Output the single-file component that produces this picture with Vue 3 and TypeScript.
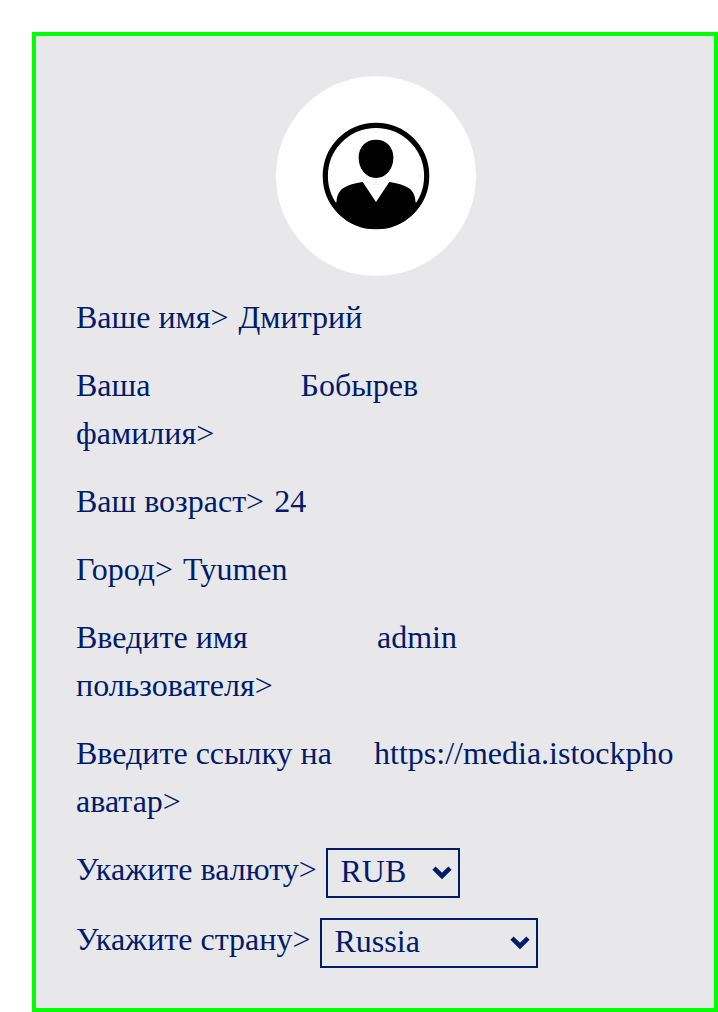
<script setup lang="ts">
import { ref } from 'vue'

interface Field {
  label: string
  value: string
  labelWidth?: number
}

const fields = ref<Field[]>([
  { label: 'Ваше имя>', value: 'Дмитрий' },
  { label: 'Ваша фамилия>', value: 'Бобырев', labelWidth: 214.6 },
  { label: 'Ваш возраст>', value: '24' },
  { label: 'Город>', value: 'Tyumen' },
  { label: 'Введите имя пользователя>', value: 'admin', labelWidth: 291 },
  { label: 'Введите ссылку на аватар>', value: 'https://media.istockpho', labelWidth: 288 },
])

const selects = ref([
  { label: 'Укажите валюту>', value: 'RUB', labelWidth: 240, width: 134 },
  { label: 'Укажите страну>', value: 'Russia', labelWidth: 234, width: 218 },
])
</script>

<template>
  <main class="page">
    <section class="card">
      <div class="avatar">
        <svg width="108" height="108" viewBox="0 0 108 108">
          <defs>
            <clipPath id="disc"><circle cx="54" cy="54" r="53" /></clipPath>
          </defs>
          <circle cx="54" cy="54" r="50.7" fill="none" stroke="#000" stroke-width="5.2" />
          <path
            d="M54 17.700C64.500 17.700 71.400 25.200 71.400 35.500C71.400 47 64 56 54 56C44 56 36.600 47 36.600 35.500C36.600 25.200 43.500 17.700 54 17.700Z"
          />
          <path
            clip-path="url(#disc)"
            d="M0 81H13.600L14.500 80C14.700 74 17 69 21 66.300C26 63 33 61 40.700 60L54 80L67.300 60C75 61 82 63 87 66.300C91 69 93.300 74 93.500 80L94.400 81H108V108H0Z"
          />
        </svg>
      </div>

      <div v-for="field in fields" :key="field.label" class="row">
        <span class="label" :style="field.labelWidth ? { width: field.labelWidth + 'px' } : undefined">{{ field.label }}</span>
        <span class="value">{{ field.value }}</span>
      </div>

      <div v-for="item in selects" :key="item.label" class="row">
        <span class="label single-line" :style="{ width: item.labelWidth + 'px' }">{{ item.label }}</span>
        <div class="select" :style="{ width: item.width + 'px' }">
          <span>{{ item.value }}</span>
          <svg class="chevron" width="20" height="14" viewBox="0 0 20 14">
            <path d="M2 2.200L10 10L18 2.200" fill="none" stroke="#001b69" stroke-width="4.600" />
          </svg>
        </div>
      </div>
    </section>
  </main>
</template>

<style>
body {
  background: #fff;
}
</style>

<style scoped>
.page {
  box-sizing: border-box;
  width: 718px;
  height: 1012px;
  padding: 32px 0 0 32px;
}

.card {
  box-sizing: border-box;
  display: flex;
  flex-direction: column;
  gap: 20px;
  height: 980px;
  padding: 40px 38px 40px 40px;
  border: 4px solid #00ff00;
  background: #e8e8ea;
  color: #001b69;
  font-family: 'Liberation Serif', 'Times New Roman', serif;
  font-size: 32px;
  line-height: 48px;
}

.avatar {
  display: flex;
  flex: none;
  align-items: center;
  justify-content: center;
  align-self: center;
  width: 200px;
  height: 200px;
  border-radius: 50%;
  background: #fff;
}

.row {
  display: flex;
  flex: none;
  align-items: flex-start;
  gap: 10px;
}

.label {
  flex: none;
  margin-top: -3px;
  margin-bottom: 3px;
}

.single-line {
  white-space: nowrap;
}

.value {
  white-space: nowrap;
  margin-top: -3px;
}

.select {
  box-sizing: border-box;
  display: flex;
  align-items: center;
  justify-content: space-between;
  height: 50px;
  padding: 0 6px 0 12.5px;
  border: 2px solid #001b69;
  line-height: 46px;
}

.select span {
  margin-top: -4px;
}

.chevron {
  flex: none;
}
</style>
